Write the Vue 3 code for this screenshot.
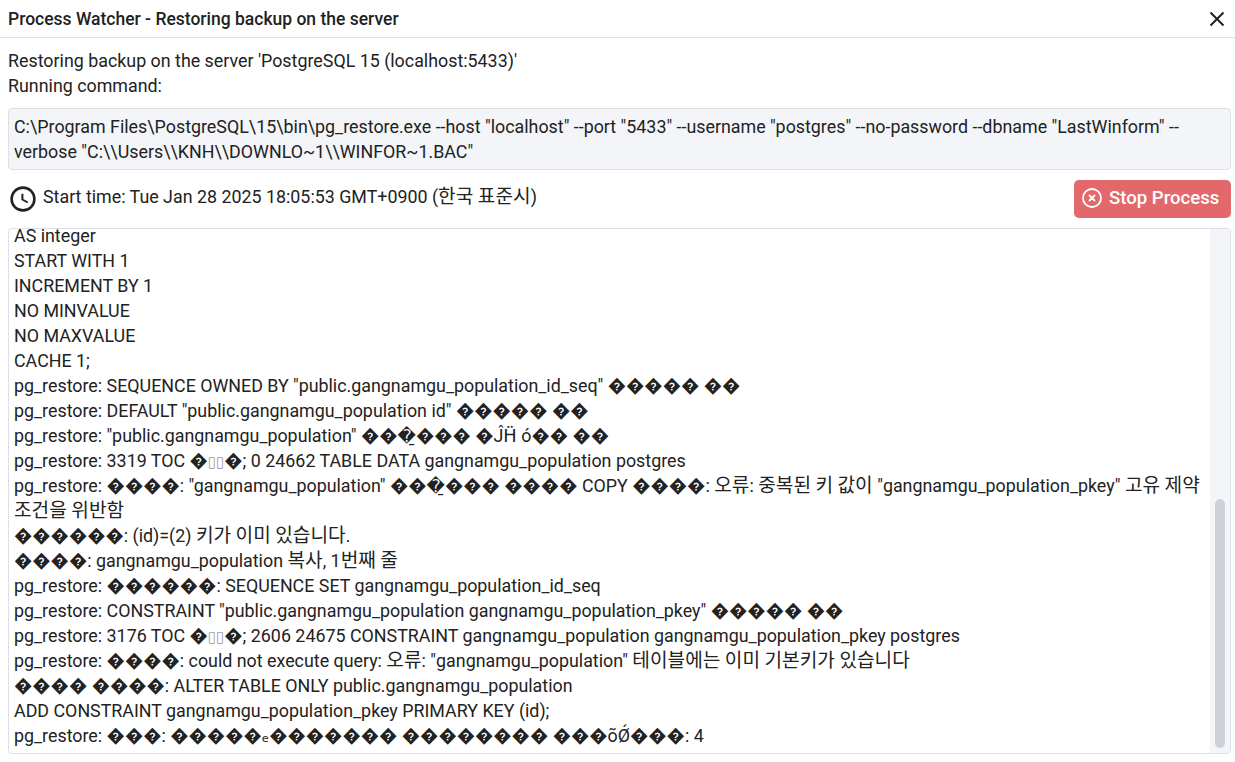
<script setup>
const logLines = [
  'AS integer',
  'START WITH 1',
  'INCREMENT BY 1',
  'NO MINVALUE',
  'NO MAXVALUE',
  'CACHE 1;',
  'pg_restore: SEQUENCE OWNED BY "public.gangnamgu_population_id_seq" \uFFFD\uFFFD\uFFFD\uFFFD\uFFFD \uFFFD\uFFFD',
  'pg_restore: DEFAULT "public.gangnamgu_population id" \uFFFD\uFFFD\uFFFD\uFFFD\uFFFD \uFFFD\uFFFD',
  'pg_restore: "public.gangnamgu_population" \uFFFD\uFFFD\uFFFD\u0331\uFFFD\uFFFD\uFFFD \uFFFD\u0134\u1E26 \u00F3\uFFFD\uFFFD \uFFFD\uFFFD',
  'pg_restore: 3319 TOC \uFFFD\u25AF\u25AF\uFFFD; 0 24662 TABLE DATA gangnamgu_population postgres',
  'pg_restore: \uFFFD\uFFFD\uFFFD\uFFFD: "gangnamgu_population" \uFFFD\uFFFD\uFFFD\u0331\uFFFD\uFFFD\uFFFD \uFFFD\uFFFD\uFFFD\uFFFD COPY \uFFFD\uFFFD\uFFFD\uFFFD: 오류: 중복된 키 값이 "gangnamgu_population_pkey" 고유 제약 조건을 위반함',
  '\uFFFD\uFFFD\uFFFD\uFFFD\uFFFD\uFFFD: (id)=(2) 키가 이미 있습니다.',
  '\uFFFD\uFFFD\uFFFD\uFFFD: gangnamgu_population 복사, 1번째 줄',
  'pg_restore: \uFFFD\uFFFD\uFFFD\uFFFD\uFFFD\uFFFD: SEQUENCE SET gangnamgu_population_id_seq',
  'pg_restore: CONSTRAINT "public.gangnamgu_population gangnamgu_population_pkey" \uFFFD\uFFFD\uFFFD\uFFFD\uFFFD \uFFFD\uFFFD',
  'pg_restore: 3176 TOC \uFFFD\u25AF\u25AF\uFFFD; 2606 24675 CONSTRAINT gangnamgu_population gangnamgu_population_pkey postgres',
  'pg_restore: \uFFFD\uFFFD\uFFFD\uFFFD: could not execute query: 오류: "gangnamgu_population" 테이블에는 이미 기본키가 있습니다',
  '\uFFFD\uFFFD\uFFFD\uFFFD \uFFFD\uFFFD\uFFFD\uFFFD: ALTER TABLE ONLY public.gangnamgu_population',
  'ADD CONSTRAINT gangnamgu_population_pkey PRIMARY KEY (id);',
  'pg_restore: \uFFFD\uFFFD\uFFFD: \uFFFD\uFFFD\uFFFD\uFFFD\uFFFD\u2091\uFFFD\uFFFD\uFFFD\uFFFD\uFFFD\uFFFD\uFFFD \uFFFD\uFFFD\uFFFD\uFFFD\uFFFD\uFFFD\uFFFD\uFFFD \uFFFD\uFFFD\uFFFD\u00F5\u00D8\u0301\uFFFD\uFFFD\uFFFD: 4',
];

// hangul and broken glyphs get their own size, like the fallback fonts in the log
const segments = (line) =>
  line
    .split(/([\uAC00-\uD7A3]+|\u25AF+)/)
    .filter(Boolean)
    .map((text) => ({
      text,
      kind: /[\uAC00-\uD7A3]/.test(text) ? "ko" : text[0] === "\u25AF" ? "tofu" : "",
    }));
</script>

<template>
  <div class="watcher">
    <div class="watcher-header">
      <span class="watcher-title">Process Watcher - Restoring backup on the server</span>
      <svg class="close-icon" viewBox="0 0 24 24" width="24" height="24">
        <path d="M5.5 5.5 18.5 18.5M18.5 5.5 5.5 18.5" fill="none" stroke="#222" stroke-width="2" />
      </svg>
    </div>
    <div class="watcher-body">
      <div class="desc">
        <div>Restoring backup on the server 'PostgreSQL 15 (localhost:5433)'</div>
        <div>Running command:</div>
      </div>
      <div class="command">C:\Program Files\PostgreSQL\15\bin\pg_restore.exe --host "localhost" --port "5433" --username "postgres" --no-password --dbname "LastWinform" --verbose "C:\\Users\\KNH\\DOWNLO~1\\WINFOR~1.BAC"</div>
      <div class="status-row">
        <div class="start-time">
          <svg class="clock" viewBox="0 0 28 28" width="28" height="28">
            <circle cx="14" cy="14" r="11.4" fill="none" stroke="#222" stroke-width="2.6" />
            <path d="M13.4 8.8V14.5L18.7 17.5" fill="none" stroke="#222" stroke-width="2" />
          </svg>
          <span class="start-text">Start time: Tue Jan 28 2025 18:05:53 GMT+0900 (<span class="ko">한국</span> <span class="ko">표준시</span>)</span>
        </div>
        <button class="stop-btn">
          <svg viewBox="0 0 24 24" width="24" height="24">
            <circle cx="12" cy="12" r="9" fill="none" stroke="#fff" stroke-width="1.8" />
            <path d="M9 9 15 15M15 9 9 15" fill="none" stroke="#fff" stroke-width="1.8" />
          </svg>
          <span>Stop Process</span>
        </button>
      </div>
      <div class="log">
        <div class="log-text">
          <div v-for="(line, index) in logLines" :key="index">
            <span v-for="(seg, i) in segments(line)" :key="i" :class="seg.kind">{{ seg.text }}</span>
          </div>
        </div>
        <div class="scroll-track">
          <div class="scroll-thumb"></div>
        </div>
      </div>
    </div>
  </div>
</template>

<style>
html,
body {
  margin: 0;
  background: #fff;
}
</style>

<style scoped>
.watcher {
  width: 1235px;
  height: 762px;
  display: flex;
  flex-direction: column;
  box-sizing: border-box;
  font-family: Roboto, "Noto Sans CJK KR", "DejaVu Sans", sans-serif;
  font-size: 17.85px;
  color: #222;
  overflow: hidden;
}

.ko {
  font-size: 19.15px;
  line-height: 1;
}

.tofu {
  font-size: 15px;
  line-height: 1;
  color: #9a9da3;
}

.watcher-header {
  height: 37px;
  flex: none;
  display: flex;
  align-items: center;
  justify-content: space-between;
  padding: 0 6px 0 8px;
  border-bottom: 1px solid #dde0e6;
}

.watcher-title {
  font-weight: 500;
  font-size: 17.5px;
}

.watcher-body {
  flex: 1;
  min-height: 0;
  display: flex;
  flex-direction: column;
  padding: 10px 4px 8px 8px;
}

.desc {
  line-height: 25px;
}

.command {
  margin-top: 10px;
  height: 62px;
  flex: none;
  box-sizing: border-box;
  padding: 5px 5px;
  line-height: 25px;
  background: #f3f5f9;
  border: 1px solid #dde0e6;
  border-radius: 4px;
}

.status-row {
  display: flex;
  justify-content: space-between;
  align-items: flex-start;
  margin-top: 10px;
  height: 48px;
  flex: none;
}

.start-time {
  display: flex;
  align-items: flex-start;
  gap: 6px;
  padding-left: 1px;
}

.clock {
  margin-top: 5px;
}

.start-text {
  margin-top: 4px;
  line-height: 25px;
}

.stop-btn {
  height: 38px;
  width: 157px;
  display: flex;
  align-items: center;
  gap: 5px;
  padding: 0 0 2px 6px;
  border: none;
  border-radius: 5px;
  background: #e2686b;
  color: #fff;
  font: inherit;
  font-size: 18.6px;
  font-weight: 500;
}

.log {
  flex: 1;
  min-height: 0;
  display: flex;
  border: 1px solid #dde0e6;
  border-radius: 4px;
  overflow: hidden;
}

.log-text {
  flex: 1;
  min-width: 0;
  display: flex;
  flex-direction: column;
  justify-content: flex-end;
  padding: 0 6px 4.5px 5px;
  line-height: 25.05px;
}

.scroll-track {
  width: 20px;
  flex: none;
  display: flex;
  justify-content: center;
  align-items: flex-end;
  background: #f3f5f9;
  padding-bottom: 5px;
}

.scroll-thumb {
  width: 10px;
  height: 249px;
  border-radius: 5px;
  background: #cdd1d9;
}
</style>
